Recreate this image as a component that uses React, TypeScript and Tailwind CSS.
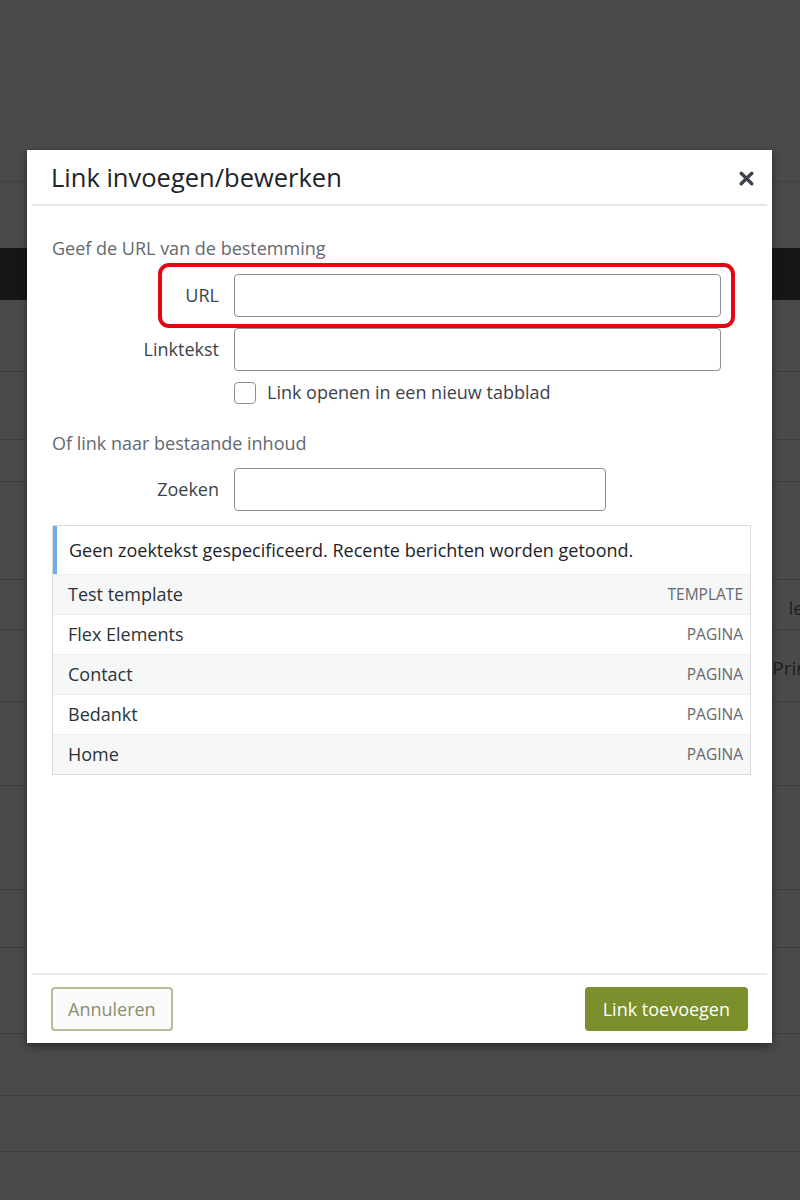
import React from 'react';

const results = [
  { title: 'Test template', type: 'TEMPLATE' },
  { title: 'Flex Elements', type: 'PAGINA' },
  { title: 'Contact', type: 'PAGINA' },
  { title: 'Bedankt', type: 'PAGINA' },
  { title: 'Home', type: 'PAGINA' },
];

const Backdrop: React.FC = () => (
  <div className="absolute inset-0 flex flex-col bg-[#4a4a4a]">
    <div className="h-[182px] border-b border-[#414141]" />
    <div className="h-[66px]" />
    <div className="h-[52px] bg-[#161616]" />
    <div className="h-[72px] border-b border-[#3e3e3e]" />
    <div className="h-[68px] border-b border-[#3e3e3e]" />
    <div className="h-[42px] border-b border-[#3e3e3e]" />
    <div className="h-[98px] border-b border-[#3e3e3e]" />
    <div className="relative h-[50px] border-b border-[#3e3e3e]">
      <span className="absolute right-[-4px] top-[14px] text-[19px] text-[#1e1e1e]">le</span>
    </div>
    <div className="relative h-[72px] border-b border-[#3e3e3e]">
      <span className="absolute right-[-8px] top-[24px] text-[19px] text-[#1e1e1e]">Prin</span>
    </div>
    <div className="h-[84px] border-b border-[#3e3e3e]" />
    <div className="h-[104px] border-b border-[#3e3e3e]" />
    <div className="h-[58px] border-b border-[#3e3e3e]" />
    <div className="h-[86px] border-b border-[#3e3e3e]" />
    <div className="h-[62px] border-b border-[#3e3e3e]" />
    <div className="h-[56px] border-b border-[#3e3e3e]" />
  </div>
);

const Field: React.FC<{ label: string; width: string }> = ({ label, width }) => (
  <div className="flex items-center">
    <label className="w-[182px] pr-[15px] text-right text-[18px] text-[#3c434a]">{label}</label>
    <div className={`${width} h-[43px] rounded-[4px] border border-[#8c8f94] bg-white`} />
  </div>
);

export default function App() {
  return (
    <div
      className="relative h-[1200px] w-[800px] overflow-hidden"
      style={{ fontFamily: '"Open Sans", "Noto Sans", sans-serif' }}
    >
      <Backdrop />
      <div className="absolute left-[27px] top-[150px] flex h-[893px] w-[745px] flex-col bg-white shadow-[0_3px_8px_rgba(0,0,0,0.45)]">
        <div className="mx-[5px] flex h-[56px] items-center justify-between border-b-2 border-[#e6e6e6] pl-[19px] pr-[12px]">
          <h1 className="text-[25.5px] font-medium text-[#1d2327]">Link invoegen/bewerken</h1>
          <svg width="17" height="17" viewBox="0 0 16 16" className="mt-[2px]">
            <path d="M3 3 L13 13 M13 3 L3 13" stroke="#3c434a" strokeWidth="3.2" strokeLinecap="round" />
          </svg>
        </div>

        <div className="flex-1 px-[25px] pt-[29px]">
          <p className="text-[18px] leading-[26px] text-[#646970]">Geef de URL van de bestemming</p>
          <div className="relative mt-[13px]">
            <div className="pointer-events-none absolute left-[106px] top-[-11px] h-[65px] w-[577px] rounded-[11px] border-[4px] border-[#e30613]" />
            <Field label="URL" width="w-[487px]" />
          </div>
          <div className="mt-[11px]">
            <Field label="Linktekst" width="w-[487px]" />
          </div>
          <div className="ml-[182px] mt-[8px] flex items-center gap-[11px]">
            <span className="h-[22px] w-[22px] rounded-[4px] border border-[#8c8f94] bg-white" />
            <span className="text-[18px] text-[#3c434a]">Link openen in een nieuw tabblad</span>
          </div>

          <p className="mt-[24px] text-[18px] leading-[26px] text-[#646970]">Of link naar bestaande inhoud</p>
          <div className="mt-[12px]">
            <Field label="Zoeken" width="w-[372px]" />
          </div>

          <div className="mt-[14px] w-[699px] border border-[#dcdcde]">
            <div className="flex h-[48px] items-center border-l-[4px] border-[#72aee6] pl-[12px] text-[18px] text-[#1d2327]">
              Geen zoektekst gespecificeerd. Recente berichten worden getoond.
            </div>
            {results.map((r, i) => (
              <div
                key={r.title}
                className={`flex h-[40px] items-center justify-between border-t border-[#f0f0f1] pl-[15px] pr-[7px] ${
                  i % 2 === 0 ? 'bg-[#f6f7f7]' : 'bg-white'
                }`}
              >
                <span className="text-[18px] text-[#2c3338]">{r.title}</span>
                <span className="text-[15.5px] text-[#646970]">{r.type}</span>
              </div>
            ))}
          </div>
        </div>

        <div className="mx-[5px] flex h-[70px] items-center justify-between border-t-2 border-[#ececec] pl-[19px] pr-[19px]">
          <button className="h-[44px] rounded-[4px] border-2 border-[#b6bd94] bg-[#fafafa] px-[15px] text-[18px] text-[#8a8f6e]">
            Annuleren
          </button>
          <button className="h-[44px] rounded-[4px] bg-[#7b8f2c] px-[18px] text-[18px] text-white">
            Link toevoegen
          </button>
        </div>
      </div>
    </div>
  );
}
